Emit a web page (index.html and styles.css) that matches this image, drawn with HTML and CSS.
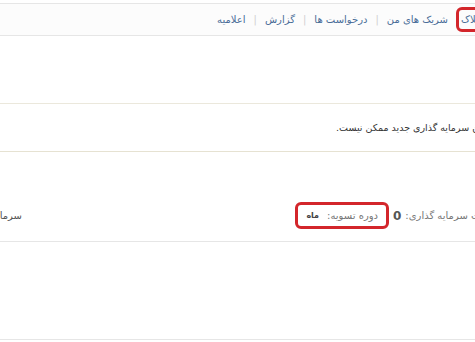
FILE: index.html
```html
<!DOCTYPE html>
<html lang="fa" dir="rtl">
<head>
    <meta charset="UTF-8">
    <title>سرمایه گذاری</title>
    <link rel="stylesheet" href="styles.css">
</head>
<body>
<div class="page">
    <div class="top-menu">
        <a class="menu-item marked" href="#">املاک</a>
        <a class="menu-item" href="#">شریک های من</a>
        <span class="sep">|</span>
        <a class="menu-item" href="#">درخواست ها</a>
        <span class="sep">|</span>
        <a class="menu-item" href="#">گزارش</a>
        <span class="sep">|</span>
        <a class="menu-item" href="#">اعلامیه</a>
    </div>

    <div class="notice">
        <span class="notice-text">امکان سرمایه گذاری جدید ممکن نیست.</span>
    </div>

    <div class="invest-row">
        <div class="invest-info">
            <span class="label">مدت سرمایه گذاری:</span>
            <b class="value">0</b>
            <span class="period marked">
                <span class="label">دوره تسویه:</span>
                <b class="unit">ماه</b>
            </span>
        </div>
        <div class="invest-total">سرمایه کل</div>
    </div>

    <div class="empty-box"></div>
</div>
</body>
</html>
```

FILE: styles.css
```css
html, body {
    margin: 0;
    padding: 0;
    background-color: #ffffff;
    overflow: hidden;
}
body {
    font-family: 'DejaVu Sans', sans-serif;
    font-size: 10px;
    color: #444;
}
.page {
    margin: 0 -16px 0 -24px;
}
.top-menu {
    margin-top: 3px;
    height: 31px;
    border-top: 1px solid #e6e6e6;
    border-bottom: 1px solid #e6e6e6;
    background-color: #fcfcfc;
    display: flex;
    align-items: center;
    gap: 8px;
    padding: 0 4px;
}
.menu-item {
    color: #4a6d98;
    text-decoration: none;
}
.sep {
    color: #d0d0d0;
}
.marked {
    border: 3px solid #d3262b;
    border-radius: 6px;
    padding: 5px 8px;
}
.top-menu .marked {
    padding: 4px 0 4px 2px;
}
.notice {
    margin-top: 67px;
    height: 47px;
    border-top: 1px solid #ebe8dc;
    border-bottom: 1px solid #e6e2d2;
    display: flex;
    align-items: center;
    color: #333;
    font-size: 9.5px;
}
.notice-text {
    margin-right: -4px;
}
.invest-row {
    height: 90px;
    border-bottom: 1px solid #e6e6e6;
    display: flex;
    justify-content: space-between;
    align-items: center;
    padding-top: 38px;
    box-sizing: border-box;
}
.invest-info {
    display: flex;
    align-items: center;
    gap: 4px;
}
.label {
    color: #777;
}
.value {
    color: #555;
    font-size: 12px;
}
.period {
    display: flex;
    align-items: center;
    gap: 8px;
}
.unit {
    font-size: 8px;
    color: #444;
}
.invest-total {
    color: #555;
}
.empty-box {
    height: 97px;
    border-bottom: 1px solid #e6e6e6;
}
```
